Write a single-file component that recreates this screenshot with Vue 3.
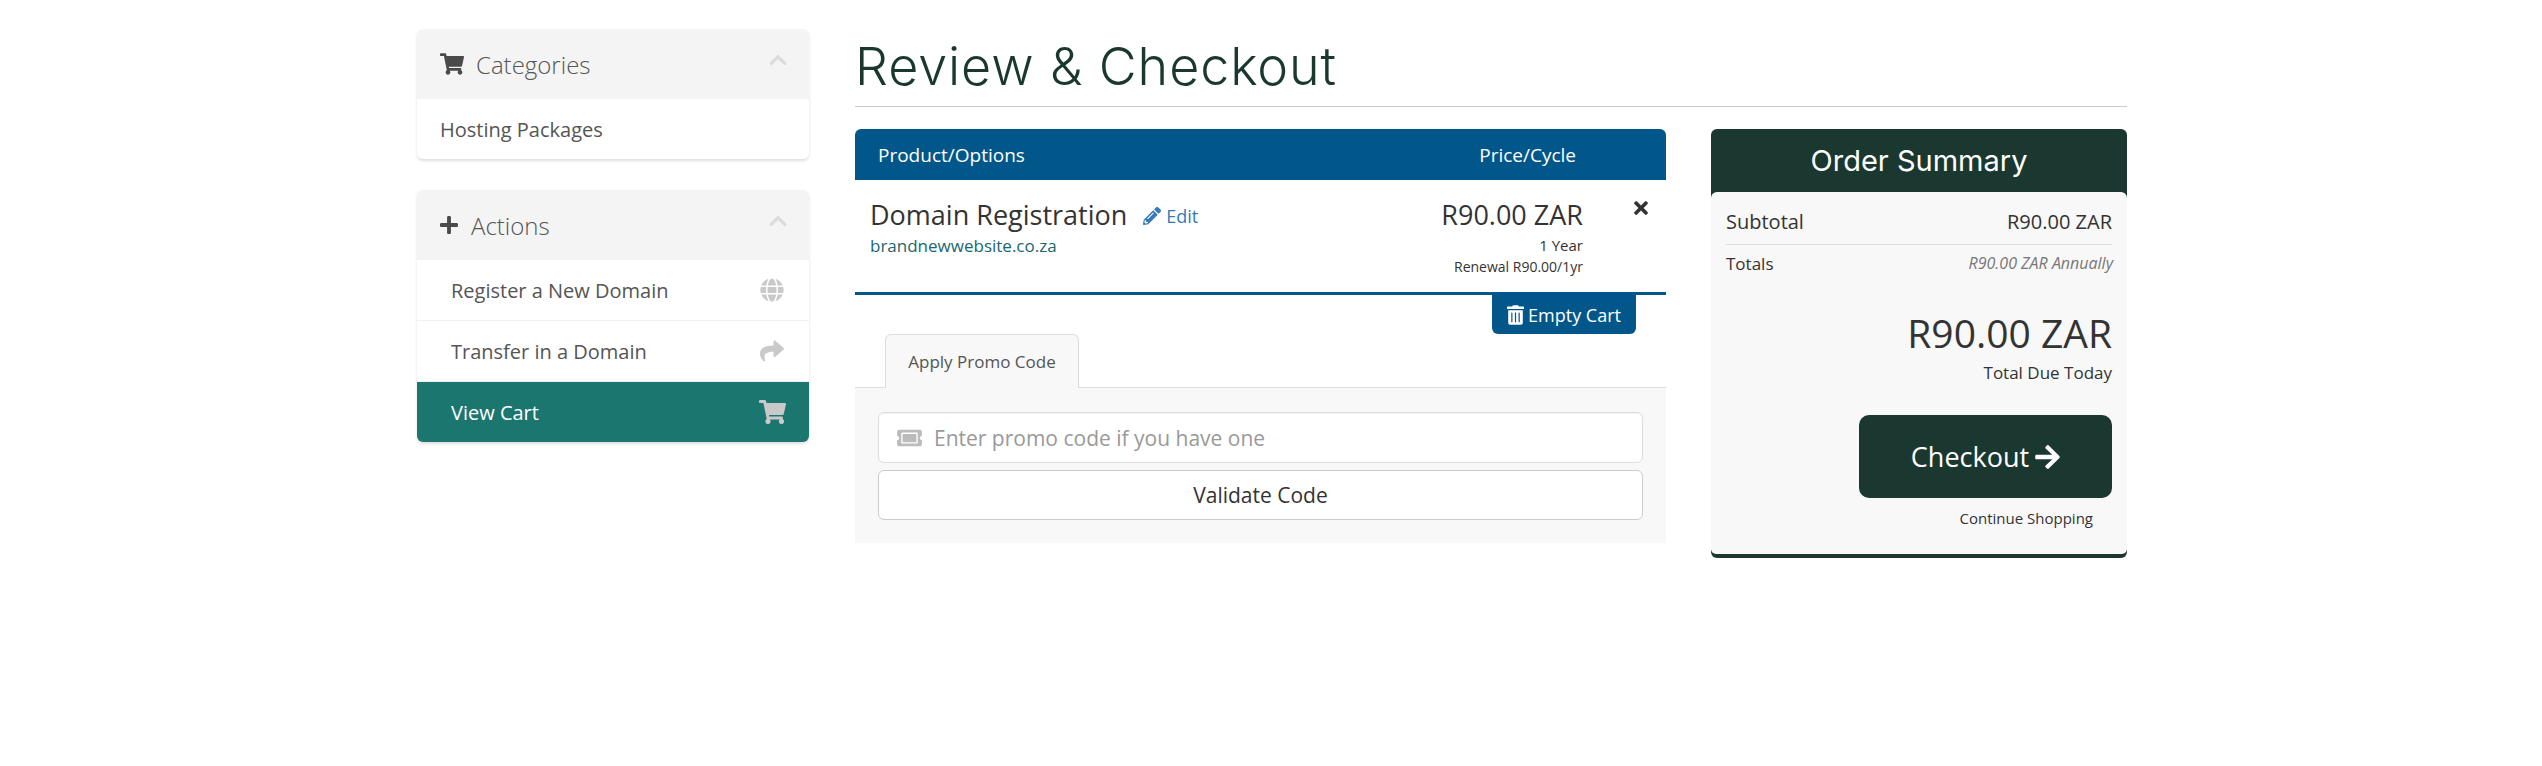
<script setup>
const icons = {
  cart: { vb: '0 0 576 512', d: 'M528.12 301.319l47.273-208C578.806 78.301 567.391 64 551.99 64H159.208l-9.166-44.81C147.758 8.021 137.93 0 126.529 0H24C10.745 0 0 10.745 0 24v16c0 13.255 10.745 24 24 24h69.883l70.248 343.435C147.325 417.1 136 435.222 136 456c0 30.928 25.072 56 56 56s56-25.072 56-56c0-15.674-6.447-29.835-16.824-40h209.647C430.447 426.165 424 440.326 424 456c0 30.928 25.072 56 56 56s56-25.072 56-56c0-22.172-12.888-41.332-31.579-50.405l5.517-24.276c3.413-15.018-8.002-29.319-23.403-29.319H218.117l-6.545-32h293.145c11.206 0 20.92-7.754 23.403-18.681z' },
  plus: { vb: '0 0 448 512', d: 'M416 208H272V64c0-17.67-14.33-32-32-32h-32c-17.67 0-32 14.33-32 32v144H32c-17.67 0-32 14.33-32 32v32c0 17.67 14.33 32 32 32h144v144c0 17.67 14.33 32 32 32h32c17.67 0 32-14.33 32-32V304h144c17.67 0 32-14.33 32-32v-32c0-17.67-14.33-32-32-32z' },
  up: { vb: '0 0 448 512', d: 'M240.971 130.524l194.343 194.343c9.373 9.373 9.373 24.569 0 33.941l-22.667 22.667c-9.357 9.357-24.522 9.375-33.901.04L224 227.495 69.255 381.516c-9.379 9.335-24.544 9.317-33.901-.04l-22.667-22.667c-9.373-9.373-9.373-24.569 0-33.941L207.03 130.525c9.372-9.373 24.568-9.373 33.941-.001z' },
  globe: { vb: '0 0 496 512', d: 'M336.5 160C322 70.7 287.8 8 248 8s-74 62.7-88.5 152h177zM152 256c0 22.2 1.2 43.5 3.3 64h185.3c2.1-20.5 3.3-41.8 3.3-64s-1.2-43.5-3.3-64H155.3c-2.1 20.5-3.3 41.8-3.3 64zm324.7-96c-28.6-67.9-86.5-120.4-158-141.6 24.4 33.8 41.2 84.7 50 141.6h108zM177.2 18.4C105.8 39.6 47.8 92.1 19.3 160h108c8.7-56.9 25.5-107.8 49.9-141.6zM487.4 192H372.7c2.1 21 3.3 42.5 3.3 64s-1.2 43-3.3 64h114.6c5.5-20.5 8.6-41.8 8.6-64s-3.1-43.5-8.5-64zM120 256c0-21.5 1.2-43 3.3-64H8.6C3.2 212.5 0 233.8 0 256s3.2 43.5 8.6 64h114.6c-2-21-3.2-42.5-3.2-64zm39.5 96c14.5 89.3 48.7 152 88.5 152s74-62.7 88.5-152h-177zm159.3 141.6c71.4-21.2 129.4-73.7 158-141.6h-108c-8.8 56.9-25.6 107.8-50 141.6zM19.3 352c28.6 67.9 86.5 120.4 158 141.6-24.4-33.8-41.2-84.7-50-141.6h-108z' },
  share: { vb: '0 0 512 512', d: 'M503.691 189.836L327.687 37.851C312.281 24.546 288 35.347 288 56.015v80.053C127.371 137.907 0 170.1 0 322.326c0 61.441 39.581 122.309 83.333 154.132 13.653 9.931 33.111-2.533 28.077-18.631C66.066 312.814 132.917 274.316 288 272.085V360c0 20.7 24.3 31.453 39.687 18.164l176.004-152c11.071-9.562 11.086-26.753 0-36.328z' },
  pencil: { vb: '0 0 512 512', d: 'M497.9 142.1l-46.1 46.1c-4.7 4.7-12.3 4.7-17 0l-111-111c-4.7-4.7-4.7-12.3 0-17l46.1-46.1c18.7-18.7 49.1-18.7 67.9 0l60.1 60.1c18.8 18.7 18.8 49.1 0 67.9zM284.2 99.8L21.6 362.4.4 483.9c-2.9 16.4 11.4 30.6 27.8 27.8l121.5-21.3 262.6-262.6c4.7-4.7 4.7-12.3 0-17l-111-111c-4.8-4.7-12.4-4.7-17.1 0zM124.1 339.9c-5.5-5.5-5.5-14.3 0-19.8l154-154c5.5-5.5 14.3-5.5 19.8 0s5.5 14.3 0 19.8l-154 154c-5.5 5.5-14.3 5.5-19.8 0zM88 424h48v36.3l-64.5 11.3-31.1-31.1L51.7 376H88v48z' },
  trash: { vb: '0 0 448 512', d: 'M32 464a48 48 0 0 0 48 48h288a48 48 0 0 0 48-48V128H32zm272-256a16 16 0 0 1 32 0v224a16 16 0 0 1-32 0zm-96 0a16 16 0 0 1 32 0v224a16 16 0 0 1-32 0zm-96 0a16 16 0 0 1 32 0v224a16 16 0 0 1-32 0zM432 32H312l-9.4-18.7A24 24 0 0 0 281.1 0H166.8a23.72 23.72 0 0 0-21.4 13.3L136 32H16A16 16 0 0 0 0 48v32a16 16 0 0 0 16 16h416a16 16 0 0 0 16-16V48a16 16 0 0 0-16-16z' },
  times: { vb: '0 0 352 512', d: 'M242.72 256l100.07-100.07c12.28-12.28 12.28-32.19 0-44.48l-22.24-22.24c-12.28-12.28-32.19-12.28-44.48 0L176 189.28 75.93 89.21c-12.28-12.28-32.19-12.28-44.48 0L9.21 111.45c-12.28 12.28-12.28 32.19 0 44.48L109.28 256 9.21 356.07c-12.28 12.28-12.28 32.19 0 44.48l22.24 22.24c12.28 12.28 32.2 12.28 44.48 0L176 322.72l100.07 100.07c12.28 12.28 32.2 12.28 44.48 0l22.24-22.24c12.28-12.28 12.28-32.19 0-44.48L242.72 256z' },
  arrow: { vb: '0 0 448 512', d: 'M190.5 66.9l22.2-22.2c9.4-9.4 24.6-9.4 33.9 0L441 239c9.4 9.4 9.4 24.6 0 33.9L246.6 467.3c-9.4 9.4-24.6 9.4-33.9 0l-22.2-22.2c-9.5-9.5-9.3-25 .4-34.3L311.4 296H24c-13.3 0-24-10.7-24-24v-32c0-13.3 10.7-24 24-24h287.4L190.9 101.2c-9.8-9.3-10-24.8-.4-34.3z' },
  ticket: { vb: '0 0 576 512', d: 'M128 160h320v192H128V160zm400 96c0 26.51 21.49 48 48 48v96c0 26.51-21.49 48-48 48H48c-26.51 0-48-21.49-48-48v-96c26.51 0 48-21.49 48-48s-21.49-48-48-48v-96c0-26.51 21.49-48 48-48h480c26.51 0 48 21.49 48 48v96c-26.51 0-48 21.49-48 48zm-48-104c0-13.255-10.745-24-24-24H120c-13.255 0-24 10.745-24 24v208c0 13.255 10.745 24 24 24h336c13.255 0 24-10.745 24-24V152z' }
}
</script>

<template>
  <div class="page">
    <aside class="side">
      <section class="panel">
        <header class="panel-head">
          <svg class="head-ico cart-ico" :viewBox="icons.cart.vb"><path :d="icons.cart.d" /></svg>
          <span class="head-title">Categories</span>
          <svg class="chev" :viewBox="icons.up.vb"><path :d="icons.up.d" /></svg>
        </header>
        <a class="cat-item">Hosting Packages</a>
      </section>
      <section class="panel">
        <header class="panel-head">
          <svg class="head-ico plus-ico" :viewBox="icons.plus.vb"><path :d="icons.plus.d" /></svg>
          <span class="head-title">Actions</span>
          <svg class="chev" :viewBox="icons.up.vb"><path :d="icons.up.d" /></svg>
        </header>
        <a class="act-item">Register a New Domain<svg class="act-ico" :viewBox="icons.globe.vb"><path :d="icons.globe.d" /></svg></a>
        <a class="act-item">Transfer in a Domain<svg class="act-ico" :viewBox="icons.share.vb"><path :d="icons.share.d" /></svg></a>
        <a class="act-item active">View Cart<svg class="act-ico wide" :viewBox="icons.cart.vb"><path :d="icons.cart.d" /></svg></a>
      </section>
    </aside>

    <main class="main">
      <h1 class="title">Review &amp; Checkout</h1>
      <div class="columns">
        <div class="cart">
          <div class="thead">
            <span>Product/Options</span>
            <span class="thead-price">Price/Cycle</span>
          </div>
          <div class="row">
            <div class="prod">
              <div class="prod-line">
                <span class="prod-name">Domain Registration</span>
                <a class="edit"><svg class="edit-ico" :viewBox="icons.pencil.vb"><path :d="icons.pencil.d" /></svg>Edit</a>
              </div>
              <div class="domain">brandnewwebsite.co.za</div>
            </div>
            <div class="price">
              <div class="price-main">R90.00 ZAR</div>
              <div class="price-sub year">1 Year</div>
              <div class="price-sub">Renewal R90.00/1yr</div>
            </div>
            <svg class="remove" :viewBox="icons.times.vb"><path :d="icons.times.d" /></svg>
          </div>
          <div class="empty-wrap">
            <button class="empty"><svg class="trash" :viewBox="icons.trash.vb"><path :d="icons.trash.d" /></svg>Empty Cart</button>
          </div>
          <div class="tabs"><div class="tab">Apply Promo Code</div></div>
          <div class="promo">
            <div class="input">
              <svg class="ticket" :viewBox="icons.ticket.vb"><path :d="icons.ticket.d" /></svg>
              <span>Enter promo code if you have one</span>
            </div>
            <button class="validate">Validate Code</button>
          </div>
        </div>

        <div class="summary">
          <div class="sum-head">Order Summary</div>
          <div class="sum-body">
            <div class="sub-row"><span>Subtotal</span><span>R90.00 ZAR</span></div>
            <div class="tot-row"><span>Totals</span><em>R90.00 ZAR Annually</em></div>
            <div class="due">R90.00 ZAR</div>
            <div class="due-label">Total Due Today</div>
            <div class="check-wrap">
              <button class="checkout">Checkout<svg class="arrow" :viewBox="icons.arrow.vb"><path :d="icons.arrow.d" /></svg></button>
            </div>
            <div class="continue">Continue Shopping</div>
          </div>
        </div>
      </div>
    </main>
  </div>
</template>

<style scoped>
.page {
  display: flex;
  box-sizing: border-box;
  width: 2542px;
  padding: 29px 415px 0 417px;
  font-family: "Open Sans", sans-serif;
  color: #333;
}
svg { fill: currentColor; display: block; flex: none; }
.side { width: 392px; flex: none; }
.panel {
  background: #fff;
  border-radius: 6px;
  overflow: hidden;
  margin-bottom: 31px;
  box-shadow: 0 2px 3px rgba(0,0,0,.13);
}
.panel-head {
  height: 70px;
  background: #f4f4f4;
  display: flex;
  align-items: center;
  padding: 0 23px;
  color: #555;
}
.head-ico { height: 24px; color: #4a4a4a; }
.cart-ico { width: 24px; margin-right: 12px; }
.plus-ico { width: 18px; margin-right: 13px; }
.head-title { font-size: 24px; font-weight: 300; color: #555; flex: 1; }
.chev { width: 18px; height: 20px; color: #dcdcdc; margin-top: -9px; margin-right: -1px; }
.cat-item {
  display: flex;
  align-items: center;
  height: 60px;
  padding-left: 23px;
  font-size: 20px;
  color: #555;
}
.act-item {
  display: flex;
  align-items: center;
  justify-content: space-between;
  box-sizing: border-box;
  height: 61px;
  padding: 0 25px 0 34px;
  font-size: 20px;
  color: #555;
  border-bottom: 1px solid #f0f0f0;
}
.act-item.active { background: #1c7670; color: #fff; height: 60px; border-bottom: 0; }
.act-ico { width: 24px; height: 24px; color: #c9c9c9; }
.act-ico.wide { width: 27px; margin-right: -2px; }
.main { flex: 1; margin-left: 46px; min-width: 0; }
.title {
  margin: 0 0 22px;
  height: 78px;
  box-sizing: border-box;
  border-bottom: 1px solid #ccc;
  font-family: Inter, sans-serif;
  font-weight: 300;
  font-size: 52px;
  letter-spacing: .9px;
  line-height: 76px;
  color: #1b3830;
}
.columns { display: flex; align-items: flex-start; }
.cart { width: 811px; flex: none; }
.thead {
  height: 51px;
  background: #02578a;
  color: #fff;
  border-radius: 6px 6px 0 0;
  display: flex;
  align-items: center;
  justify-content: space-between;
  padding: 0 90px 0 23px;
  font-size: 19px;
  font-weight: 500;
}
.row {
  display: flex;
  box-sizing: border-box;
  height: 115px;
  border-bottom: 3px solid #02578a;
  padding: 17px 18px 0 15px;
  position: relative;
}
.prod { flex: 1; }
.prod-line { display: flex; align-items: baseline; }
.prod-name { font-size: 27px; line-height: 36px; color: #333; }
.edit { display: flex; align-items: center; margin-left: 16px; font-size: 18px; color: #337ab7; }
.edit-ico { width: 18px; height: 18px; margin-right: 5px; }
.domain { font-size: 17px; line-height: 23px; color: #1a6670; margin-top: 1px; }
.price { text-align: right; width: 240px; margin-right: 51px; }
.price-main { font-size: 27px; line-height: 36px; color: #333; }
.price-sub { font-size: 14px; line-height: 21px; color: #333; }
.price-sub.year { margin-top: 2px; font-size: 15px; }
.remove { width: 14px; height: 20px; color: #333; margin-top: 1px; }
.empty-wrap { display: flex; justify-content: flex-end; padding-right: 30px; height: 39px; }
.empty {
  border: 0;
  background: #02578a;
  color: #fff;
  width: 144px;
  height: 39px;
  padding: 0;
  border-radius: 0 0 6px 6px;
  font: 500 18px "Open Sans", sans-serif;
  display: flex;
  align-items: center;
  justify-content: center;
}
.trash { width: 17px; height: 20px; margin-right: 4px; }
.tabs { height: 54px; border-bottom: 1px solid #ddd; padding-left: 30px; box-sizing: border-box; }
.tab {
  box-sizing: border-box;
  width: 194px;
  height: 54px;
  background: #f8f8f8;
  border: 1px solid #ddd;
  border-bottom: 0;
  border-radius: 6px 6px 0 0;
  display: flex;
  align-items: center;
  justify-content: center;
  font-size: 17px;
  color: #555;
}
.promo { background: #f8f8f8; height: 155px; padding: 24px 23px 0 23px; box-sizing: border-box; }
.input {
  box-sizing: border-box;
  height: 51px;
  background: #fff;
  border: 1px solid #ddd;
  border-radius: 6px;
  display: flex;
  align-items: center;
  padding-left: 18px;
  font-size: 21px;
  color: #999;
  box-shadow: inset 0 1px 1px rgba(0,0,0,.05);
}
.ticket { width: 25px; height: 22px; color: #bbb; margin-right: 12px; }
.validate {
  box-sizing: border-box;
  display: block;
  width: 100%;
  height: 50px;
  margin-top: 7px;
  background: #fff;
  border: 1px solid #ccc;
  border-radius: 6px;
  font: 400 21px "Open Sans", sans-serif;
  color: #333;
}
.summary { width: 416px; flex: none; margin-left: 45px; border-radius: 6px; overflow: hidden; background: #1b3830; }
.sum-head {
  height: 63px;
  color: #fff;
  display: flex;
  align-items: center;
  justify-content: center;
  font-family: Inter, sans-serif;
  font-weight: 400;
  font-size: 29px;
}
.sum-body {
  box-sizing: border-box;
  height: 362px;
  margin-bottom: 4px;
  background: #f8f8f8;
  border-radius: 6px 6px 5px 5px;
  padding: 15px 15px 0;
}
.sub-row {
  display: flex;
  justify-content: space-between;
  font-size: 20px;
  line-height: 30px;
  height: 37px;
  border-bottom: 1px solid #ddd;
}
.tot-row {
  display: flex;
  justify-content: space-between;
  font-size: 17px;
  line-height: 22px;
  margin-top: 8px;
}
.tot-row em { font-size: 16px; line-height: 20px; color: #777; margin-right: -1px; }
.due { text-align: right; font-size: 39px; line-height: 52px; margin-top: 32px; }
.due-label { text-align: right; font-size: 17px; line-height: 22px; margin-top: 3px; }
.check-wrap { display: flex; justify-content: flex-end; margin-top: 31px; }
.checkout {
  width: 253px;
  height: 83px;
  border: 0;
  border-radius: 10px;
  background: #1b3830;
  color: #fff;
  font: 500 27px "Open Sans", sans-serif;
  display: flex;
  align-items: center;
  justify-content: center;
  padding: 0;
}
.arrow { width: 25px; height: 28px; margin-left: 6px; }
.continue { text-align: right; padding-right: 19px; font-size: 15px; line-height: 20px; margin-top: 10px; }
</style>

<style>
html, body { background: #fff; margin: 0; }
</style>
